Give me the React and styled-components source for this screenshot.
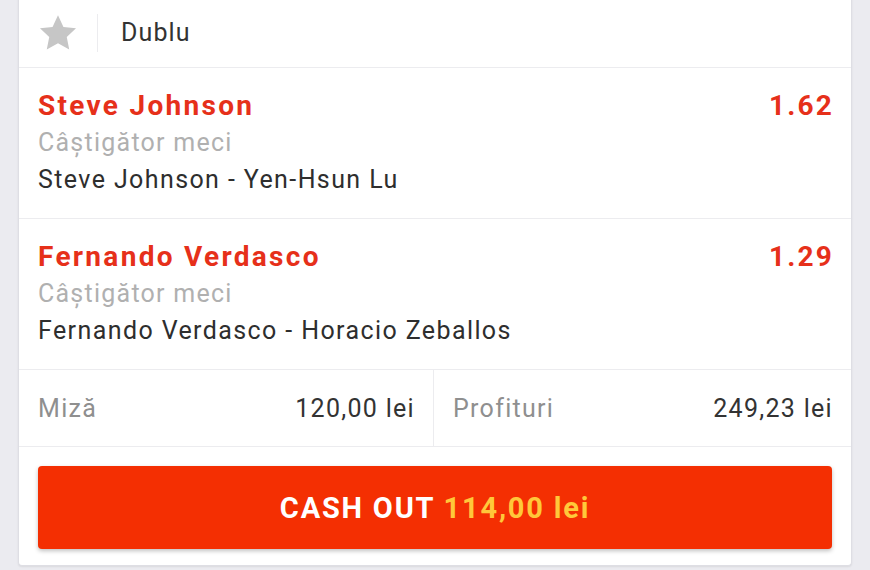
import React from 'react'
import styled, { createGlobalStyle } from 'styled-components'

const GlobalStyle = createGlobalStyle`
  html, body {
    margin: 0;
    padding: 0;
    background: #ebebf0;
    font-family: Roboto, 'Noto Sans', sans-serif;
  }
`;

const Page = styled.div`
  width: 870px;
  height: 570px;
  padding: 0 18px;
  box-sizing: border-box;
  overflow: hidden;
`;

const Card = styled.div`
  background: #fff;
  border: 1px solid #dedee4;
  border-top: none;
  border-radius: 0 0 4px 4px;
  box-shadow: 0 1px 2px rgba(0, 0, 0, 0.08);
  margin-top: -2px;
`;

const Header = styled.div`
  height: 70px;
  display: flex;
  align-items: center;
  padding-left: 19px;
  border-bottom: 1px solid #ececef;
  box-sizing: border-box;
`;

const StarBox = styled.div`
  width: 40px;
  height: 38px;
  display: flex;
  align-items: center;
  justify-content: center;
  padding-right: 19px;
  border-right: 1px solid #ececef;
  margin-right: 23px;
`;

const BetType = styled.span`
  font-size: 25px;
  letter-spacing: 1.1px;
  color: #333;
`;

const Selection = styled.div`
  display: flex;
  justify-content: space-between;
  align-items: flex-start;
  padding: 20px 19px 0 19px;
  height: 151px;
  box-sizing: border-box;
  border-bottom: 1px solid #ececef;
`;

const SelInfo = styled.div`
  display: flex;
  flex-direction: column;
`;

const Pick = styled.div`
  font-size: 28px;
  font-weight: 700;
  letter-spacing: 2.3px;
  color: #e6301a;
  line-height: 36px;
`;

const Market = styled.div`
  font-size: 25px;
  letter-spacing: 1.25px;
  color: #b0b0b0;
  line-height: 37px;
`;

const Event = styled.div`
  font-size: 25px;
  letter-spacing: 1.4px;
  color: #2e2e2e;
  line-height: 37px;
`;

const Odds = styled.div`
  font-size: 28px;
  font-weight: 700;
  letter-spacing: 2.2px;
  margin-right: -2px;
  color: #e6301a;
  line-height: 36px;
`;

const StakeRow = styled.div`
  display: grid;
  grid-template-columns: 415px 1fr;
  height: 76px;
  border-bottom: 1px solid #ececef;
`;

const StakeCell = styled.div`
  display: flex;
  align-items: center;
  justify-content: space-between;
  padding: 0 19px;
  border-right: ${p => (p.$divider ? '1px solid #ececef' : 'none')};
  font-size: 25px;
  letter-spacing: 1.3px;
`;

const Label = styled.span`
  color: #8f8f8f;
`;

const Value = styled.span`
  color: #333;
  margin-right: -1px;
`;

const ButtonWrap = styled.div`
  padding: 19px 19px 16px 19px;
`;

const CashOut = styled.button`
  width: 100%;
  height: 83px;
  border: none;
  border-radius: 4px;
  background: #f42f02;
  box-shadow: 0 2px 4px rgba(0, 0, 0, 0.25);
  font-family: Roboto, sans-serif;
  font-size: 29px;
  font-weight: 700;
  color: #fff;
  letter-spacing: 1.8px;
  cursor: pointer;
`;

const Amount = styled.span`
  color: #ffc83a;
`;

const Star = () => (
  <svg width="40" height="38" viewBox="0 0 24 23">
    <path
      d="M12 0.8l3.3 7 7.6 0.9-5.6 5.2 1.5 7.6L12 17.7l-6.8 3.8 1.5-7.6L1.1 8.7l7.6-0.9z"
      fill="#c6c6c6"
    />
  </svg>
);

const selections = [
  { pick: 'Steve Johnson', odds: '1.62', event: 'Steve Johnson - Yen-Hsun Lu' },
  { pick: 'Fernando Verdasco', odds: '1.29', event: 'Fernando Verdasco - Horacio Zeballos' },
];

const App = () => (
  <>
    <GlobalStyle />
    <Page>
      <Card>
        <Header>
          <StarBox><Star /></StarBox>
          <BetType>Dublu</BetType>
        </Header>
        {selections.map(s => (
          <Selection key={s.pick}>
            <SelInfo>
              <Pick>{s.pick}</Pick>
              <Market>Câștigător meci</Market>
              <Event>{s.event}</Event>
            </SelInfo>
            <Odds>{s.odds}</Odds>
          </Selection>
        ))}
        <StakeRow>
          <StakeCell $divider>
            <Label>Miză</Label>
            <Value>120,00 lei</Value>
          </StakeCell>
          <StakeCell>
            <Label>Profituri</Label>
            <Value>249,23 lei</Value>
          </StakeCell>
        </StakeRow>
        <ButtonWrap>
          <CashOut>CASH OUT <Amount>114,00 lei</Amount></CashOut>
        </ButtonWrap>
      </Card>
    </Page>
  </>
);

export default App
